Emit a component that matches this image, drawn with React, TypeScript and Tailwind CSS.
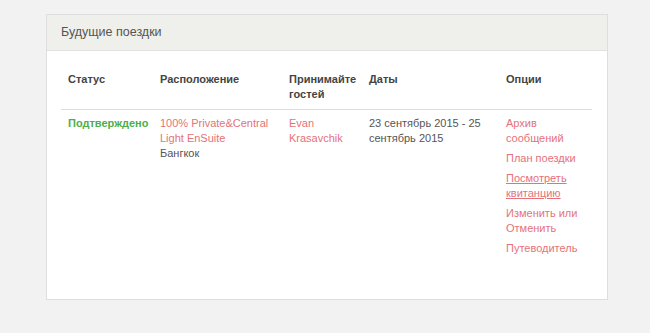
const options = [
  { label: "Архив сообщений" },
  { label: "План поездки" },
  { label: "Посмотреть квитанцию", hover: true },
  { label: "Изменить или Отменить" },
  { label: "Путеводитель" },
];

export default function App() {
  return (
    <div className="min-h-[333px] bg-[#f2f2f2] pt-[14px] font-['Liberation_Sans',Arial,sans-serif] text-[11px] leading-[15px] text-[#555]">
      <div className="ml-[46px] w-[562px] border border-[#dedede] bg-white">
        <div className="h-[36px] border-b border-[#e2e2e2] bg-[#efefeb] pl-[14px] text-[12.5px] leading-[35px] text-[#555]">
          Будущие поездки
        </div>
        <div className="px-[14px] pt-[15px] pb-[43px]">
          <table className="w-[531px] table-fixed border-collapse text-left">
            <colgroup>
              <col className="w-[92px]" />
              <col className="w-[129px]" />
              <col className="w-[80px]" />
              <col className="w-[137px]" />
              <col className="w-[93px]" />
            </colgroup>
            <thead>
              <tr className="border-b border-[#dddddd] align-top font-bold text-[#444]">
                <th className="px-[7px] pt-[6px] pb-[7px] font-bold">Статус</th>
                <th className="px-[7px] pt-[6px] pb-[7px] font-bold">Расположение</th>
                <th className="px-[7px] pt-[6px] pb-[7px] font-bold">Принимайте гостей</th>
                <th className="px-[7px] pt-[6px] pb-[7px] font-bold">Даты</th>
                <th className="px-[7px] pt-[6px] pb-[7px] font-bold">Опции</th>
              </tr>
            </thead>
            <tbody>
              <tr className="align-top">
                <td className="px-[7px] pt-[6px] font-bold text-[#4cae4c]">Подтверждено</td>
                <td className="px-[7px] pt-[6px]">
                  <a className="text-[#e5727a]">100% Private&amp;Central Light EnSuite</a>
                  <div>Бангкок</div>
                </td>
                <td className="px-[7px] pt-[6px]">
                  <a className="text-[#e5727a]">Evan Krasavchik</a>
                </td>
                <td className="px-[7px] pt-[6px]">23 сентябрь 2015 - 25 сентябрь 2015</td>
                <td className="px-[7px] pt-[6px]">
                  <ul className="flex flex-col gap-[5px]">
                    {options.map((o) => (
                      <li key={o.label}>
                        <a className={`text-[#e5727a] ${o.hover ? "underline" : ""}`}>{o.label}</a>
                      </li>
                    ))}
                  </ul>
                </td>
              </tr>
            </tbody>
          </table>
        </div>
      </div>
    </div>
  );
}
